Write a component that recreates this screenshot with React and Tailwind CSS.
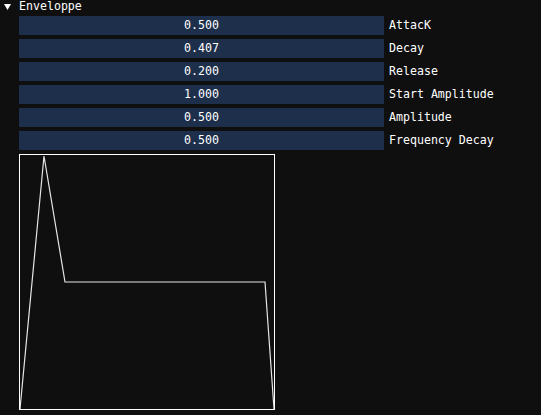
const params = [
  { value: '0.500', label: 'AttacK' },
  { value: '0.407', label: 'Decay' },
  { value: '0.200', label: 'Release' },
  { value: '1.000', label: 'Start Amplitude' },
  { value: '0.500', label: 'Amplitude' },
  { value: '0.500', label: 'Frequency Decay' },
];

// courbe de l'enveloppe dans le repère de la boîte (254x254 intérieur)
function EnvelopeGraph() {
  return (
    <div className="ml-[19px] mt-[4px] w-[256px] h-[256px] border border-white">
      <svg width="254" height="254" viewBox="0 0 254 254" className="block">
        <polyline
          points="0,254 24,1 45,127 245,127 254,254"
          fill="none"
          stroke="#e6e6e6"
          strokeWidth="1.2"
        />
      </svg>
    </div>
  );
}

export default function App() {
  return (
    <div
      className="w-[541px] h-[415px] bg-[#0f0f0f] text-white text-[11.6px] leading-none overflow-hidden"
      style={{ fontFamily: '"DejaVu Sans Mono", "Liberation Mono", monospace' }}
    >
      <div className="flex items-center h-[12px] pt-[1px]">
        <svg width="7" height="6" viewBox="0 0 7 6" className="ml-[4px] mr-[8px]">
          <polygon points="0,0 7,0 3.5,6" fill="#ffffff" />
        </svg>
        <span>Enveloppe</span>
      </div>
      <div className="flex flex-col gap-[4px] mt-[4px]">
        {params.map((p, i) => (
          <div key={i} className="flex items-center">
            <div className="ml-[19px] w-[365px] h-[19px] pt-[1px] bg-[#1d2f4b] flex items-center justify-center">
              {p.value}
            </div>
            <span className="ml-[5px] pt-[1px]">{p.label}</span>
          </div>
        ))}
      </div>
      <EnvelopeGraph />
    </div>
  );
}
